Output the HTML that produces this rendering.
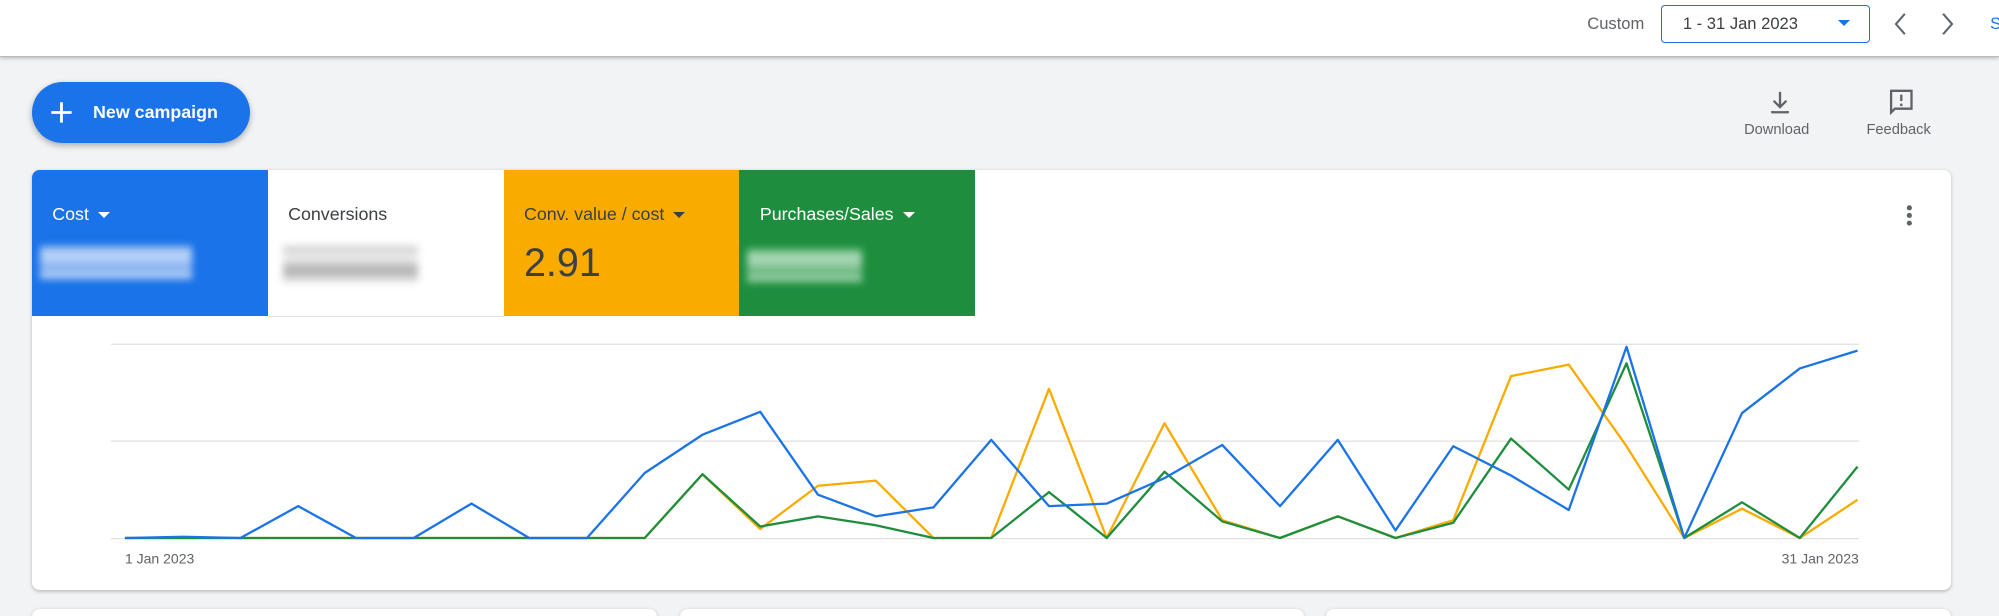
<!DOCTYPE html>
<html><head><meta charset="utf-8"><style>
html,body{margin:0;padding:0;width:1999px;height:616px;overflow:hidden;background:#f1f3f4;font-family:"Liberation Sans",Arial,sans-serif}
#w{zoom:1.2749;width:1568px;height:483px;position:relative;overflow:hidden}
.a{position:absolute}
.hdr{left:0;top:0;width:1568px;height:44px;background:#fff;border-bottom:1px solid #bbb;box-shadow:0 1px 3px rgba(0,0,0,.25)}
.btn{left:25px;top:64px;width:171px;height:48px;border-radius:24px;background:#1a73e8;box-shadow:0 2px 5px rgba(0,0,0,.3);color:#fff;font-size:14px;font-weight:bold}
.card{left:25px;top:133px;width:1505px;height:330px;background:#fff;border-radius:6px;box-shadow:0 1px 3px rgba(0,0,0,.25);overflow:hidden}
.tile{top:0;width:185px;height:115px;font-size:14px}
.tri{display:inline-block;width:0;height:0;border-left:5px solid transparent;border-right:5px solid transparent;border-top:5px solid currentColor;margin-left:7px;vertical-align:middle}
.blob{filter:blur(3px)}
.bc{top:478px;width:490px;height:20px;background:#fff;border-radius:6px;box-shadow:0 1px 3px rgba(0,0,0,.25)}
</style></head><body><div id="w">
<div class="a hdr"></div>
<div class="a" style="left:1245px;top:11px;font-size:13px;color:#5f6368">Custom</div>
<div class="a" style="left:1303px;top:4px;width:162px;height:28px;border:1.5px solid #1a73e8;border-radius:3px;background:#fff"></div>
<div class="a" style="left:1320px;top:11px;font-size:13px;color:#3c4043">1 - 31 Jan 2023</div>
<div class="a" style="left:1442px;top:16px;width:0;height:0;border-left:5px solid transparent;border-right:5px solid transparent;border-top:5px solid #1a73e8"></div>
<svg class="a" style="left:1480px;top:8px" width="60" height="22"><path d="M14 3 L7 11 L14 19" fill="none" stroke="#5f6368" stroke-width="1.6"/><path d="M44 3 L51 11 L44 19" fill="none" stroke="#5f6368" stroke-width="1.6"/></svg>
<div class="a" style="left:1561px;top:11px;font-size:13px;color:#1a73e8">S</div>

<div class="a btn"><svg class="a" style="left:14px;top:15px" width="18" height="18"><path d="M9 1V17M1 9H17" stroke="#fff" stroke-width="2.2"/></svg><span class="a" style="left:48px;top:16px">New campaign</span></div>

<svg class="a" style="left:1385px;top:69px" width="22" height="22"><path d="M11 3V14M6 10L11 15L16 10M5 18V19H17V18" fill="none" stroke="#5f6368" stroke-width="1.8"/></svg>
<div class="a" style="left:1368px;top:96px;font-size:11.5px;color:#5f6368">Download</div>
<svg class="a" style="left:1479px;top:68px" width="24" height="24"><path d="M4 3H20V17H7L4 20Z" fill="none" stroke="#5f6368" stroke-width="1.8"/><path d="M12 6V11M12 13V15" stroke="#5f6368" stroke-width="1.8"/></svg>
<div class="a" style="left:1464px;top:96px;font-size:11.5px;color:#5f6368">Feedback</div>

<div class="a card">
<div class="a tile" style="left:0;background:#1a73e8;color:#fff"><div class="a" style="left:16px;top:27px">Cost<span class="tri"></span></div>
<div class="a blob" style="left:6px;top:60px;width:120px;height:26px;background:linear-gradient(#b4cdf5,#e8f0fc,#9cbdf2,#f0f5fd);opacity:.8"></div></div>
<div class="a tile" style="left:185px;background:#fff;color:#3c4043;border-bottom:1px solid #e0e0e0"><div class="a" style="left:16px;top:27px">Conversions</div>
<div class="a blob" style="left:12px;top:60px;width:106px;height:28px;background:linear-gradient(#bbb,#eee,#999,#ddd);opacity:.8"></div></div>
<div class="a tile" style="left:370px;background:#f9ab00;color:#3c4043"><div class="a" style="left:16px;top:27px">Conv. value / cost<span class="tri"></span></div>
<div class="a" style="left:16px;top:56px;font-size:31px">2.91</div></div>
<div class="a tile" style="left:555px;background:#1e8e3e;color:#fff"><div class="a" style="left:16px;top:27px">Purchases/Sales<span class="tri"></span></div>
<div class="a blob" style="left:6px;top:62px;width:90px;height:26px;background:linear-gradient(#8fd0a0,#d8f0de,#7cc08f,#c9e9d1);opacity:.8"></div></div>
<svg class="a" style="left:1468px;top:27px" width="10" height="20"><circle cx="5" cy="3" r="2" fill="#5f6368"/><circle cx="5" cy="9" r="2" fill="#5f6368"/><circle cx="5" cy="15" r="2" fill="#5f6368"/></svg>
</div>

<svg class="a" style="left:0;top:0" width="1568" height="483">
<g stroke="#e0e0e0" stroke-width="1"><line x1="87" y1="270" x2="1458" y2="270"/><line x1="87" y1="346" x2="1458" y2="346"/><line x1="87" y1="422.5" x2="1458" y2="422.5"/></g>
<g fill="none" stroke-width="1.8" stroke-linejoin="round">
<polyline id="o" stroke="#f9ab00" points=""/>
<polyline id="g" stroke="#1e8e3e" points=""/>
<polyline id="b" stroke="#1a73e8" points=""/>
</g>
<text x="98" y="442" font-size="11" fill="#5f6368" font-family="Liberation Sans,sans-serif">1 Jan 2023</text>
<text x="1458" y="442" font-size="11" fill="#5f6368" text-anchor="end" font-family="Liberation Sans,sans-serif">31 Jan 2023</text>
</svg>
<div class="a bc" style="left:25px"></div><div class="a bc" style="left:533px"></div><div class="a bc" style="left:1040px"></div>
</div>
<script>
var D={b:[422,421,422,397,422,422,395,422,422,371,341,323,388,405,398,345,397,395,375,349,397,345,416,350,373,400,272,422,324,289,275],
o:[422,422,422,422,422,422,422,422,422,422,372,415,381,377,422,422,305,422,332,408,422,405,422,408,295,286,350,422,399,422,392],
g:[422,422,422,422,422,422,422,422,422,422,372,413,405,412,422,422,386,422,370,409,422,405,422,410,344,384,285,422,394,422,366]};
for(var k in D){document.getElementById(k).setAttribute('points',D[k].map(function(y,i){return (98+i*45.3)+','+y}).join(' '))}
</script>
</body></html>
